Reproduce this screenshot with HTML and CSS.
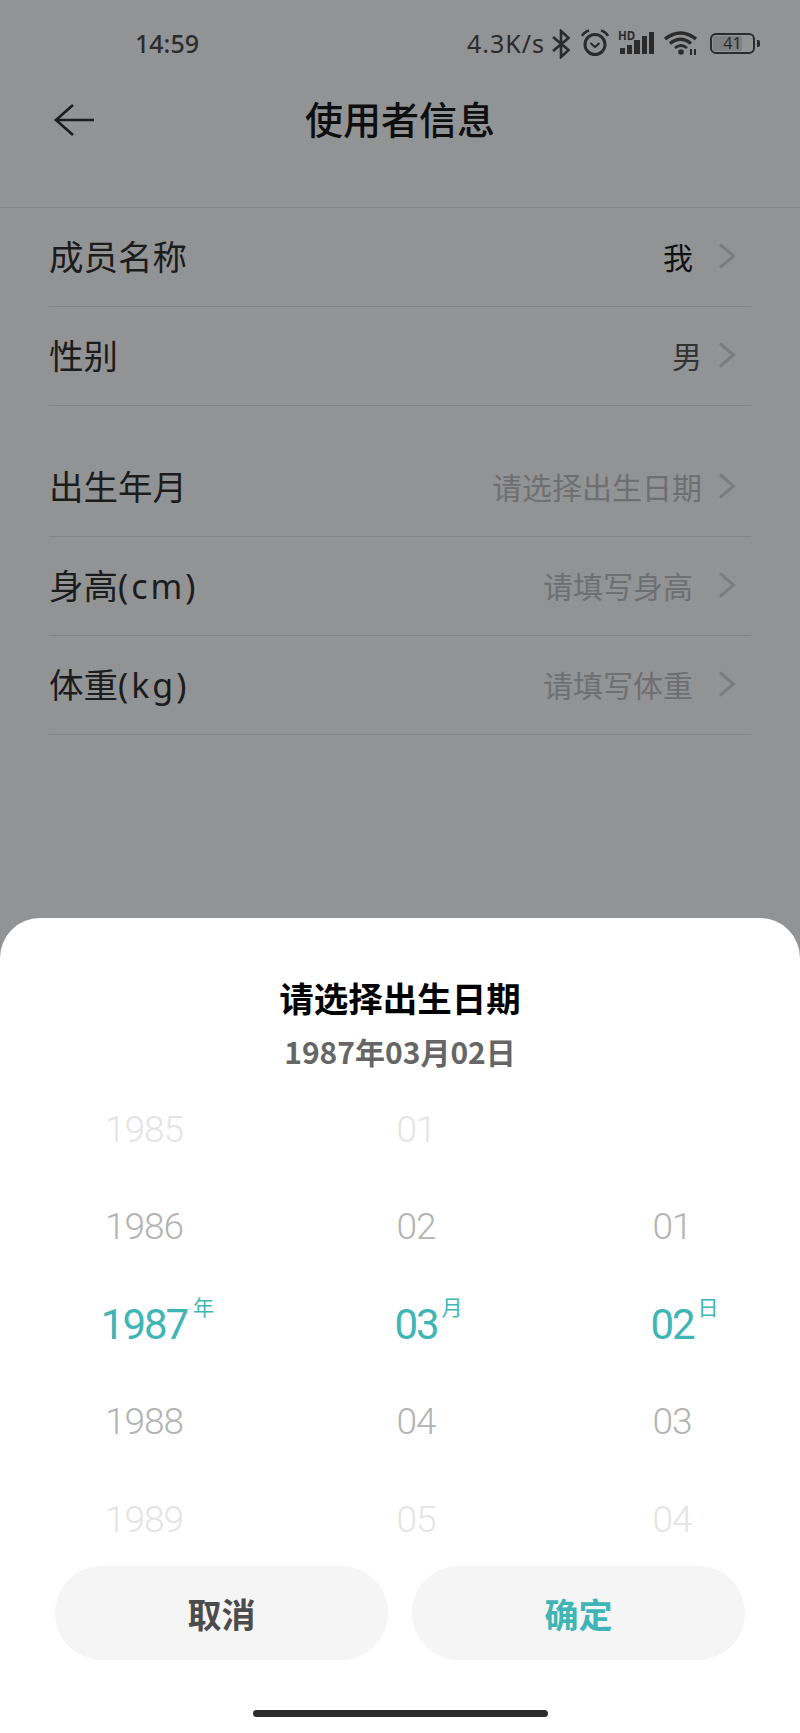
FILE: index.html
```html
<!doctype html>
<html>
<head>
  <meta charset="utf-8">
  <title>使用者信息</title>
  <link rel="stylesheet" href="styles.css">
</head>
<body>

  <div class="page">

    <div class="status">
      <span class="time">14:59</span>
      <div class="status-right">
        <span class="speed">4.3K/s</span>
        <svg class="ic-bt" width="18" height="30" viewBox="0 0 18 30"><path d="M1 8 L16.5 21 L9 28 V2 L16.5 9 L1 22" fill="none" stroke="#2b2b2c" stroke-width="2.6"/></svg>
        <svg class="ic-alarm" width="28" height="28" viewBox="0 0 28 28">
          <circle cx="14" cy="15.5" r="10" fill="none" stroke="#2b2b2c" stroke-width="3"/>
          <path d="M9.5 14 L14 18 L18.5 14" fill="none" stroke="#2b2b2c" stroke-width="2.2"/>
          <path d="M1 7 Q3 3 8 1.5 M27 7 Q25 3 20 1.5" fill="none" stroke="#2b2b2c" stroke-width="2.6"/>
        </svg>
        <svg class="ic-signal" width="37" height="30" viewBox="0 -3 37 30">
          <text x="0" y="9" class="hd">HD</text>
          <rect x="2" y="17" width="5" height="6" fill="#2b2b2c"/>
          <rect x="9" y="14" width="5" height="9" fill="#2b2b2c"/>
          <rect x="16" y="9" width="6" height="14" fill="#2b2b2c"/>
          <rect x="24" y="5" width="5" height="18" fill="#2b2b2c"/>
          <rect x="31" y="1" width="5" height="22" fill="#2b2b2c"/>
        </svg>
        <svg class="ic-wifi" width="33" height="24" viewBox="0 0 33 24">
          <path d="M1 8 Q16.5 -4 32 8" fill="none" stroke="#2b2b2c" stroke-width="3.4"/>
          <path d="M6 12.5 Q16.5 4 27 12.5" fill="none" stroke="#2b2b2c" stroke-width="3.2"/>
          <path d="M11 17 Q17 12 23 17" fill="none" stroke="#2b2b2c" stroke-width="2.8"/>
          <circle cx="17" cy="21" r="2.8" fill="#2b2b2c"/>
          <path d="M27 18 V24 M31 18 V24" fill="none" stroke="#2b2b2c" stroke-width="2"/>
        </svg>
        <div class="battery">
          <div class="battery-body"><span class="battery-fill"></span><span class="battery-num">41</span></div>
          <span class="battery-tip"></span>
        </div>
      </div>
    </div>

    <div class="header">
      <svg class="back" width="42" height="32" viewBox="0 0 42 32"><path d="M41 16 H3 M20 1 L3 16 L20 31" fill="none" stroke="#1c1c1d" stroke-width="2.6"/></svg>
      <h1>使用者信息</h1>
    </div>

    <div class="group">
      <div class="row">
        <span class="label">成员名称</span>
        <span class="value dark wide">我</span>
        <svg class="chev" width="18" height="26" viewBox="0 0 18 26"><path d="M2 1.5 L15.5 13 L2 24.5" fill="none" stroke="#7b7c7e" stroke-width="3"/></svg>
      </div>
      <div class="row">
        <span class="label">性别</span>
        <span class="value mid">男</span>
        <svg class="chev" width="18" height="26" viewBox="0 0 18 26"><path d="M2 1.5 L15.5 13 L2 24.5" fill="none" stroke="#7b7c7e" stroke-width="3"/></svg>
      </div>
    </div>

    <div class="group second">
      <div class="row">
        <span class="label">出生年月</span>
        <span class="value">请选择出生日期</span>
        <svg class="chev" width="18" height="26" viewBox="0 0 18 26"><path d="M2 1.5 L15.5 13 L2 24.5" fill="none" stroke="#7b7c7e" stroke-width="3"/></svg>
      </div>
      <div class="row">
        <span class="label">身高<span class="latin">(cm)</span></span>
        <span class="value wide">请填写身高</span>
        <svg class="chev" width="18" height="26" viewBox="0 0 18 26"><path d="M2 1.5 L15.5 13 L2 24.5" fill="none" stroke="#7b7c7e" stroke-width="3"/></svg>
      </div>
      <div class="row">
        <span class="label">体重<span class="latin">(kg)</span></span>
        <span class="value wide">请填写体重</span>
        <svg class="chev" width="18" height="26" viewBox="0 0 18 26"><path d="M2 1.5 L15.5 13 L2 24.5" fill="none" stroke="#7b7c7e" stroke-width="3"/></svg>
      </div>
    </div>
  </div>

  <div class="sheet">
    <div class="sheet-title">请选择出生日期</div>
    <div class="sheet-date">1987年03月02日</div>

    <div class="wheels">
      <div class="wheel year">
        <div class="item far">1985</div>
        <div class="item near">1986</div>
        <div class="item on">1987<sup>年</sup></div>
        <div class="item near">1988</div>
        <div class="item far">1989</div>
      </div>
      <div class="wheel month">
        <div class="item far">01</div>
        <div class="item near">02</div>
        <div class="item on">03<sup>月</sup></div>
        <div class="item near">04</div>
        <div class="item far">05</div>
      </div>
      <div class="wheel day">
        <div class="item far"></div>
        <div class="item near">01</div>
        <div class="item on">02<sup>日</sup></div>
        <div class="item near">03</div>
        <div class="item far">04</div>
      </div>
    </div>

    <div class="buttons">
      <div class="btn">取消</div>
      <div class="btn ok">确定</div>
    </div>

    <div class="home-bar"></div>
  </div>

</body>
</html>
```

FILE: styles.css
```css
html, body {
  margin: 0;
  height: 100%;
}

body {
  position: relative;
  width: 800px;
  height: 1733px;
  overflow: hidden;
  background: #929395;
  font-family: "Noto Sans CJK SC", "Noto Sans", sans-serif;
  color: #1c1c1d;
}

.status {
  display: flex;
  justify-content: space-between;
  align-items: center;
  height: 40px;
  padding: 23px 40px 0 135px;
}

.time {
  font-family: "Noto Sans", sans-serif;
  font-size: 25px;
  font-weight: 500;
  color: #2b2b2c;
}

.status-right {
  display: flex;
  align-items: center;
}

.speed {
  font-family: "Noto Sans", sans-serif;
  font-size: 25px;
  letter-spacing: 1px;
  color: #2b2b2c;
}

.ic-bt {
  margin: 2px 0 0 7px;
}

.ic-alarm {
  margin-left: 11px;
}

.ic-signal {
  margin-left: 9px;
}

.ic-wifi {
  margin-left: 9px;
}

.hd {
  font-family: "Noto Sans", sans-serif;
  font-size: 11.5px;
  font-weight: 700;
  fill: #2b2b2c;
}

.battery {
  display: flex;
  align-items: center;
  gap: 2px;
  margin-left: 13px;
}

.battery-body {
  position: relative;
  display: flex;
  justify-content: center;
  align-items: center;
  box-sizing: border-box;
  width: 45px;
  height: 21px;
  border: 2.5px solid #2b2b2c;
  border-radius: 6px;
}

.battery-fill {
  position: absolute;
  left: 1px;
  top: 1px;
  bottom: 1px;
  width: 29px;
  background: #7f8082;
  border-radius: 2px;
}

.battery-num {
  position: relative;
  font-family: "Noto Sans", sans-serif;
  font-size: 16px;
  color: #2b2b2c;
}

.battery-tip {
  width: 3px;
  height: 7px;
  background: #2b2b2c;
  border-radius: 0 2px 2px 0;
}

.header {
  position: relative;
  display: flex;
  justify-content: center;
  align-items: center;
  height: 144px;
  border-bottom: 1px solid #848587;
}

.header h1 {
  margin: 0 0 36px;
  font-size: 38px;
  font-weight: 500;
  color: #0e0e0f;
}

.back {
  position: absolute;
  left: 53px;
  top: 41px;
}

.group {
  padding: 0 49px;
}

.group.second {
  margin-top: 32px;
}

.row {
  display: flex;
  align-items: center;
  height: 98px;
  border-bottom: 1px solid #848587;
}

.label {
  flex: 1;
  margin-bottom: 4px;
  font-size: 34.5px;
  color: #1c1c1d;
}

.latin {
  font-family: "Noto Sans", sans-serif;
  font-size: 34px;
  letter-spacing: 3px;
}

.value {
  margin-bottom: 2px;
  font-size: 30px;
  color: #6e6f71;
}

.value.wide {
  margin-right: 9px;
}

.value.dark {
  color: #111;
}

.value.mid {
  color: #333;
}

.chev {
  margin: 0 15px 2px 16px;
}

.sheet {
  position: absolute;
  left: 0;
  right: 0;
  bottom: 0;
  display: flex;
  flex-direction: column;
  height: 815px;
  background: #fff;
  border-radius: 40px 40px 0 0;
}

.sheet-title {
  margin-top: 55px;
  height: 48px;
  line-height: 48px;
  text-align: center;
  font-size: 34.5px;
  font-weight: 700;
  color: #000;
}

.sheet-date {
  margin-top: 9px;
  height: 42px;
  line-height: 42px;
  text-align: center;
  font-size: 30px;
  font-weight: 700;
  color: #666;
}

.wheels {
  position: relative;
  height: 485.5px;
  margin-top: 8.5px;
}

.wheel {
  position: absolute;
  top: 0;
  width: 200px;
}

.wheel.year {
  left: 44px;
}

.wheel.month {
  left: 316px;
}

.wheel.day {
  left: 572px;
}

.item {
  display: flex;
  justify-content: center;
  align-items: center;
  position: relative;
  height: 97.5px;
  font-family: Roboto, sans-serif;
  font-weight: 300;
  font-size: 37px;
  letter-spacing: -1px;
  color: #b3b3b3;
}

.item.far {
  color: #e4e4e4;
}

.item.on {
  font-size: 42px;
  font-weight: 400;
  letter-spacing: -2px;
  color: #3fb5b5;
}

.item sup {
  position: absolute;
  top: 20px;
  margin-left: 119px;
  font-family: "Noto Sans CJK SC", sans-serif;
  font-size: 21px;
  letter-spacing: 0;
  line-height: 1;
}

.month .item sup, .day .item sup {
  margin-left: 72px;
}

.buttons {
  display: flex;
  justify-content: space-between;
  padding: 0 55px;
}

.btn {
  display: flex;
  justify-content: center;
  align-items: center;
  width: 333px;
  height: 94px;
  border-radius: 47px;
  background: #f5f5f5;
  font-size: 34px;
  font-weight: 700;
  color: #4c4c4c;
}

.btn.ok {
  color: #3fb5b5;
}

.home-bar {
  width: 295px;
  height: 7px;
  margin: 50px auto 0;
  border-radius: 4px;
  background: #2d2d2e;
}
```
